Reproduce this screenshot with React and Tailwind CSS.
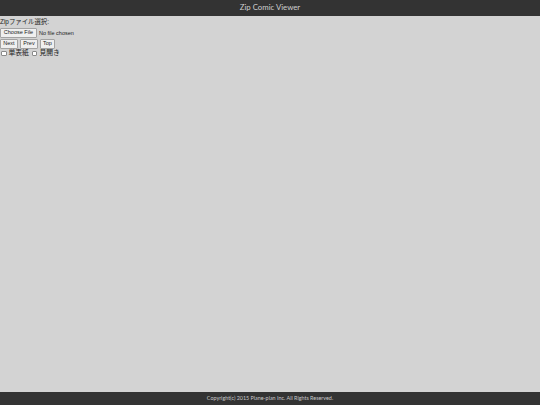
const Btn = ({ children, className = "" }) => (
  <span
    className={
      "inline-flex items-center justify-center whitespace-nowrap h-[10px] bg-[#efefef] border border-[#a3a3a3] rounded-[1px] text-[5.5px] leading-none text-[#222] " +
      className
    }
  >
    {children}
  </span>
);

const Check = ({ label }) => (
  <span className="inline-flex items-center gap-[2px]">
    <span className="inline-block w-[5.5px] h-[5.5px] bg-white border border-[#8a8a8a] rounded-[1px]" />
    <span className="text-[6.8px] whitespace-nowrap">{label}</span>
  </span>
);

export default function App() {
  return (
    <div
      className="w-[540px] h-[405px] flex flex-col bg-[#d3d3d3] text-[#222]"
      style={{ fontFamily: '"Liberation Sans", "Noto Sans CJK JP", sans-serif' }}
    >
      <div className="h-[16px] shrink-0 bg-[#333333] flex items-center justify-center">
        <span className="text-[7.8px] text-[#cfcfcf] font-['Lato',sans-serif]">
          Zip Comic Viewer
        </span>
      </div>

      <div className="flex-1 flex flex-col items-start pt-[1px]">
        <div className="text-[6.4px] leading-[9px] h-[11px] whitespace-nowrap">Zipファイル選択:</div>
        <div className="flex items-center gap-[2px] h-[10px]">
          <Btn className="w-[37px]">Choose File</Btn>
          <span className="text-[5.5px] whitespace-nowrap">No file chosen</span>
        </div>
        <div className="flex items-center gap-[2px] h-[11px]">
          <Btn className="w-[18px]">Next</Btn>
          <Btn className="w-[18px]">Prev</Btn>
          <Btn className="w-[15px]">Top</Btn>
        </div>
        <div className="flex items-center gap-[3px] h-[9px] pl-[1px]">
          <Check label="単表紙" />
          <Check label="見開き" />
        </div>
      </div>

      <div className="h-[13px] shrink-0 bg-[#333333] flex items-center justify-center">
        <span className="text-[5.4px] text-[#c8c8c8] font-['Lato',sans-serif]">
          Copyright(c) 2015 Plane-plan Inc. All Rights Reserved.
        </span>
      </div>
    </div>
  );
}
